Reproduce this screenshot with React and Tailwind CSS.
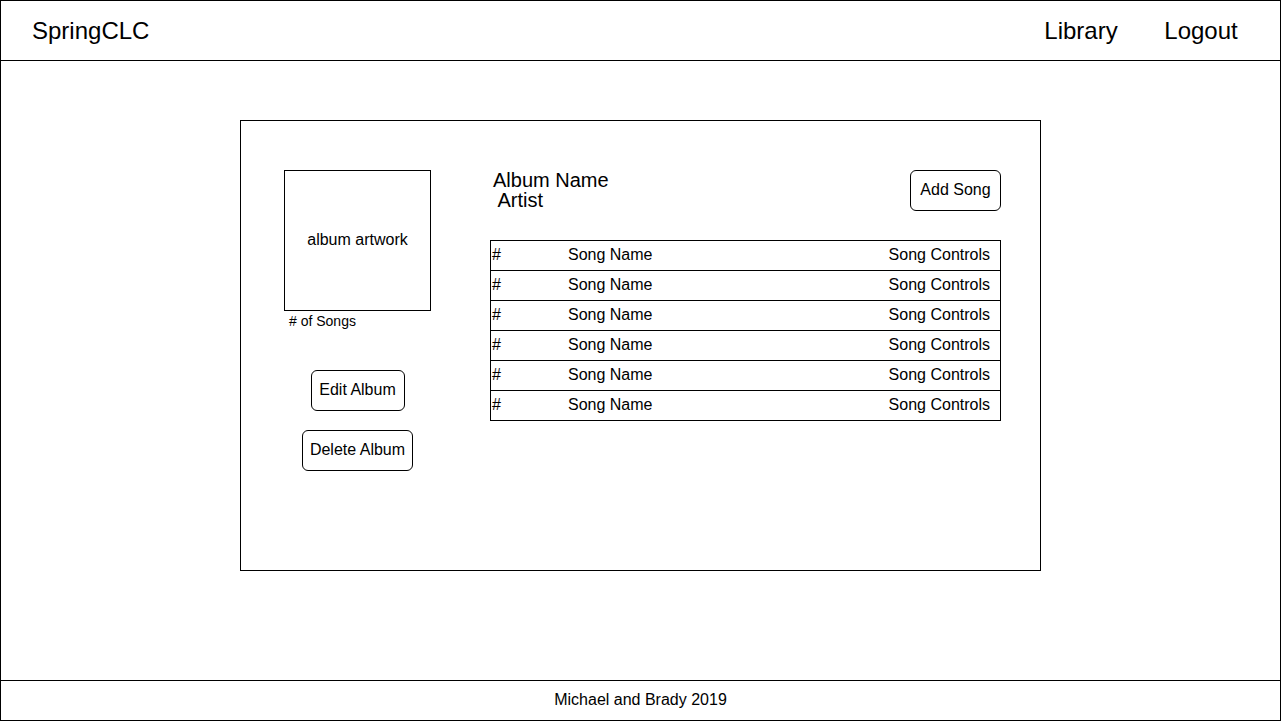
import React from "react";

const songs = [1, 2, 3, 4, 5, 6];

const Header = () => (
  <div className="flex h-[60px] items-center justify-between border-b border-black">
    <div className="pl-[31px] text-[24px]">SpringCLC</div>
    <nav className="flex pr-[19px] text-[24px]">
      <div className="w-[120px] text-center">Library</div>
      <div className="w-[120px] text-center">Logout</div>
    </nav>
  </div>
);

const SongRow = () => (
  <div className="flex h-[30px] items-center border-b border-black pb-[2px] text-[16px]">
    <div className="w-[77px] pl-px">#</div>
    <div className="flex-1">Song Name</div>
    <div className="pr-[10px]">Song Controls</div>
  </div>
);

const AlbumCard = () => (
  <div className="mx-auto mt-[59px] flex h-[451px] w-[801px] border border-black pt-[49px] pl-[43px]">
    {/* left column */}
    <div className="flex w-[147px] flex-col items-center">
      <div className="flex h-[141px] w-[147px] items-center justify-center border border-black pb-[2px] text-[16px]">
        album artwork
      </div>
      <div className="w-full pl-[5px] text-[14px] leading-[20px]">
        # of Songs
      </div>
      <button className="mt-[39px] h-[41px] w-[94px] rounded-[6px] border border-black pb-[2px] text-[16px]">
        Edit Album
      </button>
      <button className="mt-[19px] h-[41px] w-[111px] rounded-[6px] border border-black pb-[2px] text-[16px]">
        Delete Album
      </button>
    </div>

    {/* right column */}
    <div className="ml-[59px] w-[511px]">
      <div className="flex items-start justify-between">
        <div className="pl-[3px] text-[20px] leading-[20px] whitespace-pre">
          <div>Album Name</div>
          <div> Artist</div>
        </div>
        <button className="h-[41px] w-[91px] rounded-[6px] border border-black pb-[1px] text-[16px]">
          Add Song
        </button>
      </div>
      <div className="mt-[29px] border-x border-t border-black">
        {songs.map((n) => (
          <SongRow key={n} />
        ))}
      </div>
    </div>
  </div>
);

export default function App() {
  return (
    <div className="h-[722px] w-[1281px] bg-white font-['Liberation_Sans',Arial,sans-serif] text-black">
      <div className="flex h-[721px] w-[1281px] flex-col border border-black">
        <Header />
        <main className="flex-1">
          <AlbumCard />
        </main>
        <footer className="flex h-[40px] items-center justify-center border-t border-black pb-[2px] text-[16px]">
          Michael and Brady 2019
        </footer>
      </div>
    </div>
  );
}
